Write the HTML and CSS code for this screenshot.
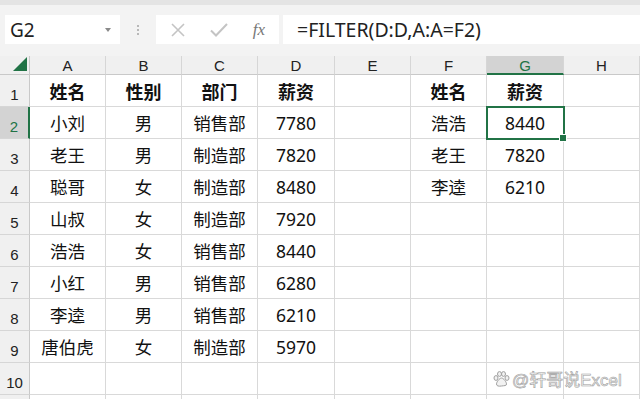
FILE: index.html
```html
<!DOCTYPE html>
<html lang="zh-CN">
  <head>
    <meta charset="UTF-8" />
    <title>FILTER</title>
    <link rel="stylesheet" href="styles.css">
  </head>

  <body>
    <div class="app">
      <!-- 编辑栏 -->
      <div class="bar">
        <div class="namebox">
          <span>G2</span>
          <svg class="drop" width="6" height="4" viewBox="0 0 6 4"><path d="M0 0h6L3 4z" fill="#8a8a8a"/></svg>
        </div>
        <div class="grip"><i></i><i></i><i></i></div>
        <div class="fxbox">
          <svg width="16" height="16" viewBox="0 0 16 16"><path d="M2 2l12 12M14 2L2 14" stroke="#c4c4c4" stroke-width="1.6" fill="none"/></svg>
          <svg width="18" height="16" viewBox="0 0 18 16"><path d="M1 8.5l5 5L17 2" stroke="#c4c4c4" stroke-width="2" fill="none"/></svg>
          <span class="fx">fx</span>
        </div>
        <div class="formula">=FILTER(D:D,A:A=F2)</div>
      </div>

      <!-- 表格 -->
      <div class="sheet" id="sheet"></div>

      <div class="mark">
        <svg width="17" height="16" viewBox="0 0 17 16">
          <g fill="#f2f2f2" stroke="#a0a0a0" stroke-width="1">
            <ellipse cx="3" cy="7" rx="2" ry="2.4"/>
            <ellipse cx="6.5" cy="3" rx="2" ry="2.4"/>
            <ellipse cx="10.5" cy="3" rx="2" ry="2.4"/>
            <ellipse cx="14" cy="7" rx="2" ry="2.4"/>
            <path d="M8.5 7c-2 0-5 4-5 6s2 2.5 5 2 5 0 5-2-3-6-5-6z"/>
          </g>
        </svg>
        <span>@轩哥说Excel</span>
      </div>
    </div>

    <script>
      var cols = ['A', 'B', 'C', 'D', 'E', 'F', 'G', 'H']
      var data = [
        ['姓名', '性别', '部门', '薪资', '', '姓名', '薪资', ''],
        ['小刘', '男', '销售部', '7780', '', '浩浩', '8440', ''],
        ['老王', '男', '制造部', '7820', '', '老王', '7820', ''],
        ['聪哥', '女', '制造部', '8480', '', '李逵', '6210', ''],
        ['山叔', '女', '制造部', '7920', '', '', '', ''],
        ['浩浩', '女', '销售部', '8440', '', '', '', ''],
        ['小红', '男', '销售部', '6280', '', '', '', ''],
        ['李逵', '男', '销售部', '6210', '', '', '', ''],
        ['唐伯虎', '女', '制造部', '5970', '', '', '', ''],
        ['', '', '', '', '', '', '', ''],
        ['', '', '', '', '', '', '', '']
      ]
      var sheet = document.getElementById('sheet')

      // 列标
      var corner = document.createElement('div')
      corner.className = 'corner'
      sheet.appendChild(corner)
      for (var i = 0; i < cols.length; i++) {
        var h = document.createElement('div')
        h.className = 'colhead' + (cols[i] === 'G' ? ' active' : '')
        h.innerHTML = cols[i]
        sheet.appendChild(h)
      }

      // 行（第11行只露出上边，不写行号）
      for (var r = 0; r < data.length; r++) {
        var rh = document.createElement('div')
        rh.className = 'rowhead' + (r === 1 ? ' active' : '')
        rh.innerHTML = r < 10 ? r + 1 : ''
        sheet.appendChild(rh)
        for (var c = 0; c < cols.length; c++) {
          var cell = document.createElement('div')
          cell.className = 'cell'
          if (r === 0) cell.className += ' bold'
          if (r === 1 && c === 6) cell.className += ' sel'
          cell.innerHTML = data[r][c]
          sheet.appendChild(cell)
        }
      }
    </script>
  </body>
</html>
```

FILE: styles.css
```css
* {
  padding: 0;
  margin: 0;
  box-sizing: border-box;
}

body {
  background: #fff;
  font-family: "Noto Sans", "Noto Sans CJK SC", sans-serif;
}

.app {
  width: 640px;
  height: 399px;
  overflow: hidden;
  position: relative;
}

.bar {
  height: 56px;
  display: flex;
  align-items: stretch;
  padding: 15px 0 12px 5px;
  background: linear-gradient(#e4e4e4 0, #e4e4e4 5px, #f3f3f3 5px);
}

.namebox {
  width: 115px;
  background: #fff;
  display: flex;
  align-items: center;
  justify-content: space-between;
  padding: 0 9px 0 5px;
  font-family: "Noto Sans", sans-serif;
  font-size: 19px;
  color: #222;
}

.drop {
  margin-top: 1px;
}

.grip {
  width: 36px;
  display: flex;
  flex-direction: column;
  align-items: center;
  justify-content: center;
  gap: 2px;
}

.grip i {
  width: 2px;
  height: 2px;
  background: #b8b8b8;
}

.fxbox {
  width: 123px;
  background: #fff;
  display: flex;
  align-items: center;
  justify-content: space-between;
  padding: 0 14px 0 14px;
}

.fx {
  font-family: "Liberation Serif", serif;
  font-style: italic;
  font-size: 17px;
  color: #777;
}

.formula {
  flex: 1;
  margin-left: 4px;
  background: #fff;
  padding-left: 14px;
  font-family: "Noto Sans", sans-serif;
  font-size: 19.5px;
  line-height: 29px;
  color: #222;
}

.sheet {
  display: grid;
  grid-template-columns: 30px 76px 76px 76px 77px 76px 76px 77px 76px;
  grid-template-rows: 19px repeat(11, 32px);
}

.corner {
  background: #f0f0f0;
  border-right: 1px solid #c9c9c9;
  border-bottom: 1px solid #c9c9c9;
  position: relative;
}

.corner::after {
  content: '';
  position: absolute;
  right: 2px;
  bottom: 3px;
  border-left: 14px solid transparent;
  border-bottom: 14px solid #217346;
}

.colhead {
  background: #f0f0f0;
  border-right: 1px solid #d6d6d6;
  border-bottom: 1px solid #c9c9c9;
  font-family: "Liberation Sans", sans-serif;
  font-size: 15px;
  line-height: 20px;
  text-align: center;
  color: #222;
}

.colhead.active {
  background: #d3d3d3;
  color: #217346;
  border-bottom: 2px solid #217346;
}

.rowhead {
  background: #f0f0f0;
  border-right: 1px solid #c9c9c9;
  border-bottom: 1px solid #d6d6d6;
  font-family: "Liberation Sans", sans-serif;
  font-size: 15px;
  color: #222;
  display: flex;
  align-items: flex-end;
  justify-content: center;
  padding-bottom: 3px;
}

.rowhead.active {
  background: #d3d3d3;
  color: #217346;
  border-right: 2px solid #217346;
}

.cell {
  border-right: 1px solid #d9d9d9;
  border-bottom: 1px solid #d9d9d9;
  display: flex;
  align-items: center;
  justify-content: center;
  font-size: 17.5px;
  color: #111;
}

.cell.bold {
  font-weight: bold;
  font-size: 18px;
}

.cell.sel {
  position: relative;
  outline: 2px solid #217346;
  outline-offset: -1px;
  z-index: 2;
}

.cell.sel::after {
  content: '';
  position: absolute;
  right: -4px;
  bottom: -4px;
  width: 6px;
  height: 6px;
  background: #217346;
  border: 1px solid #fff;
}

.mark {
  position: absolute;
  left: 493px;
  top: 366px;
  display: flex;
  align-items: center;
  gap: 2px;
  font-family: "Liberation Sans", "Noto Sans CJK SC", sans-serif;
  font-size: 17px;
  color: #f6f6f6;
  -webkit-text-stroke: 0.6px #a0a0a0;
}
```
